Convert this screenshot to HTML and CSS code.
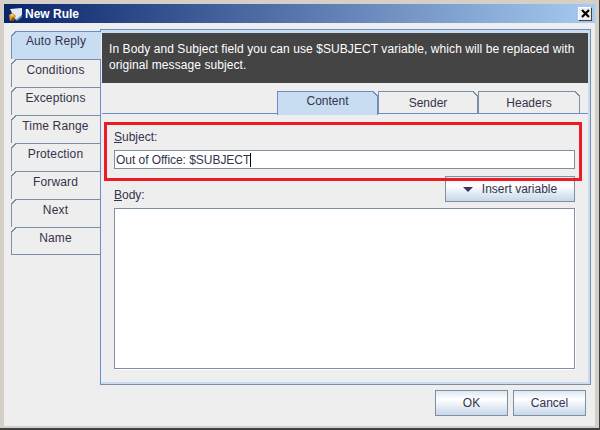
FILE: index.html
```html
<!DOCTYPE html>
<html lang="en">
<head>
<meta charset="utf-8">
<title>New Rule</title>
<link rel="stylesheet" href="styles.css">
</head>
<body>
<div class="window">
  <header class="titlebar">
    <svg class="app-icon" width="16" height="16" viewBox="0 0 16 16">
      <path d="M3 3 L15 2 L15 9 L9 14 L6 9 Z" fill="#e4eaf3"/>
      <path d="M9 14 L15 9 L15 11 L10 15 Z" fill="#6f8db8"/>
      <path d="M2 9 L6 7 L9 10 L7 14 L3 15 Z" fill="#d99a2e"/>
      <path d="M3 15 L6 11 L8 13 L7 15 Z" fill="#7a4f1c"/>
      <circle cx="5" cy="9" r="1.5" fill="#f3cf5e"/>
    </svg>
    <span class="title">New Rule</span>
    <button class="close" aria-label="Close">
      <svg width="9" height="9" viewBox="0 0 9 9"><path d="M1 1 L8 8 M8 1 L1 8" stroke="#000" stroke-width="2.2"/></svg>
    </button>
  </header>
  <div class="client">
    <div class="main">
      <nav class="side-tabs">
        <div class="side-tab active">Auto Reply</div>
        <div class="side-tab">Conditions</div>
        <div class="side-tab">Exceptions</div>
        <div class="side-tab">Time Range</div>
        <div class="side-tab">Protection</div>
        <div class="side-tab">Forward</div>
        <div class="side-tab">Next</div>
        <div class="side-tab">Name</div>
      </nav>
      <section class="panel">
        <div class="notice">In Body and Subject field you can use $SUBJECT variable, which will be replaced with original message subject.</div>
        <div class="top-tabs">
          <div class="top-tab active">Content</div>
          <div class="top-tab">Sender</div>
          <div class="top-tab">Headers</div>
        </div>
        <div class="form">
          <label class="subject-label"><u>S</u>ubject:</label>
          <div class="input">Out of Office: $SUBJECT<span class="caret"></span></div>
          <div class="body-row">
            <label class="body-label"><u>B</u>ody:</label>
            <button class="btn insert"><span class="arrow"></span>Insert variable</button>
          </div>
          <div class="textarea"></div>
          <div class="highlight"></div>
        </div>
      </section>
    </div>
    <footer class="actions">
      <button class="btn action">OK</button>
      <button class="btn action">Cancel</button>
    </footer>
  </div>
</div>
</body>
</html>
```

FILE: styles.css
```css
* { box-sizing: border-box; }
html, body { margin: 0; padding: 0; }
body { width: 600px; height: 430px; overflow: hidden; font-family: "Liberation Sans", Arial, sans-serif; font-size: 12px; color: #33334a; }

.window {
  width: 600px; height: 430px; display: flex; flex-direction: column;
  background: #d4d0c8; padding: 4px 4px 2px 4px;
  border-right: 1px solid #404040; border-bottom: 2px solid #404040;
}

.titlebar {
  height: 19px; flex: none; display: flex; align-items: center; padding: 0 3px 0 3px;
  background: linear-gradient(90deg, #0a246a, #a6caf0);
  color: #fff; font-weight: bold;
}
.app-icon { flex: none; margin-right: 2px; }
.title { flex: 1; }
.close {
  width: 14px; height: 14px; padding: 0; display: flex; align-items: center; justify-content: center;
  background: #eee; border: 1px solid; border-color: #fff #404040 #404040 #fff;
}

.client { flex: 1; display: flex; flex-direction: column; background: #eee; padding: 6px 0 0 0; min-height: 0; }
.main { display: flex; padding-left: 7px; height: 356px; flex: none; }

.side-tabs { width: 89px; flex: none; margin-top: 2px; height: 224px; border-left: 1px solid #7b8ea6; border-bottom: 1px solid #7b8ea6; }
.side-tab {
  position: relative; height: 28px; padding: 3px 1px 0 0; text-align: center; line-height: 14px; letter-spacing: .15px;
  border-top: 1px solid #7b8ea6;
}
.side-tab::before {
  content: ""; position: absolute; left: -1px; top: -1px; width: 6px; height: 6px;
  background: linear-gradient(135deg, #eee 0 3.4px, #7b8ea6 3.4px 4.6px, transparent 4.6px);
}
.side-tab.active {
  background: #c8ddf2; border-top-color: #6a8cc8; margin-right: -1px; z-index: 1; padding-top: 2px;
}
.side-tab.active::before {
  background: linear-gradient(135deg, #eee 0 3.4px, #6a8cc8 3.4px 4.6px, #c8ddf2 4.6px);
}

.panel {
  width: 491px; flex: none; display: flex; flex-direction: column;
  border: 1px solid #6a8cc8; border-right-color: #7b8ea6; border-bottom-color: #7b8ea6;
  padding: 3px 2px 2px 1px;
  background-color: #eee;
  background-image: linear-gradient(#c8ddf2, #c8ddf2), linear-gradient(#c8ddf2, #c8ddf2), linear-gradient(#c8ddf2, #c8ddf2);
  background-repeat: no-repeat;
  background-size: 100% 3px, 2px 100%, 100% 2px;
  background-position: top left, top right, bottom left;
  background-origin: padding-box;
}

.notice {
  height: 50px; flex: none; background: #444; color: #fff; padding: 8px 7px 0 7px; line-height: 16px; letter-spacing: .08px;
}

.top-tabs { height: 31px; flex: none; padding: 8px 0 0 175px; display: flex; border-bottom: 1px solid #6a8cc8; }
.top-tab {
  position: relative; width: 100px; height: 23px; border: 1px solid #7b8ea6; border-bottom: 0; text-align: center;
  padding-top: 4px; line-height: 14px;
}
.top-tab::before {
  content: ""; position: absolute; right: -1px; top: -1px; width: 6px; height: 6px;
  background: linear-gradient(225deg, #eee 0 3.4px, #7b8ea6 3.4px 4.6px, transparent 4.6px);
}
.top-tab.active {
  width: 101px; height: 24px; margin-bottom: -1px; padding-top: 2px; border-color: #6a8cc8;
  background: #c8ddf2; z-index: 1;
}
.top-tab.active::before {
  background: linear-gradient(225deg, #eee 0 3.4px, #6a8cc8 3.4px 4.6px, #c8ddf2 4.6px);
}
.top-tab:last-child { width: 102px; }

.form { position: relative; flex: 1; padding: 15px 13px 0 12px; display: flex; flex-direction: column; }
.subject-label { display: block; line-height: 14px; position: relative; top: 1px; }
.input {
  margin-top: 7px; height: 19px; background: #fff; border: 1px solid #7f8fa0;
  padding-left: 1px; line-height: 18px; white-space: nowrap; letter-spacing: -.04px;
}
.caret { display: inline-block; width: 1px; height: 14px; background: #000; vertical-align: -3px; }

.body-row { display: flex; justify-content: space-between; align-items: flex-end; height: 39px; }
.body-label { line-height: 14px; margin-bottom: 6px; }
.btn {
  font: inherit; color: #33334a; border: 1px solid #7f8fa0; padding: 0;
  background: linear-gradient(#dde8f3, #fff 35%, #c6d7e9);
}
.insert { width: 130px; height: 26px; margin-bottom: 6px; display: flex; align-items: center; justify-content: center; }
.arrow { width: 0; height: 0; border-left: 5px solid transparent; border-right: 5px solid transparent; border-top: 5px solid #3a3560; margin-right: 9px; }

.textarea { height: 161px; background: #fff; border: 1px solid #7f8fa0; box-shadow: 1px 1px 0 #fff; }

.highlight { position: absolute; left: 2px; top: 8px; width: 478px; height: 59px; border: 3px solid #ed1c24; pointer-events: none; }

.actions { flex: 1; display: flex; justify-content: flex-end; gap: 5px; padding: 5px 9px 0 0; }
.action { width: 73px; height: 26px; }
```
